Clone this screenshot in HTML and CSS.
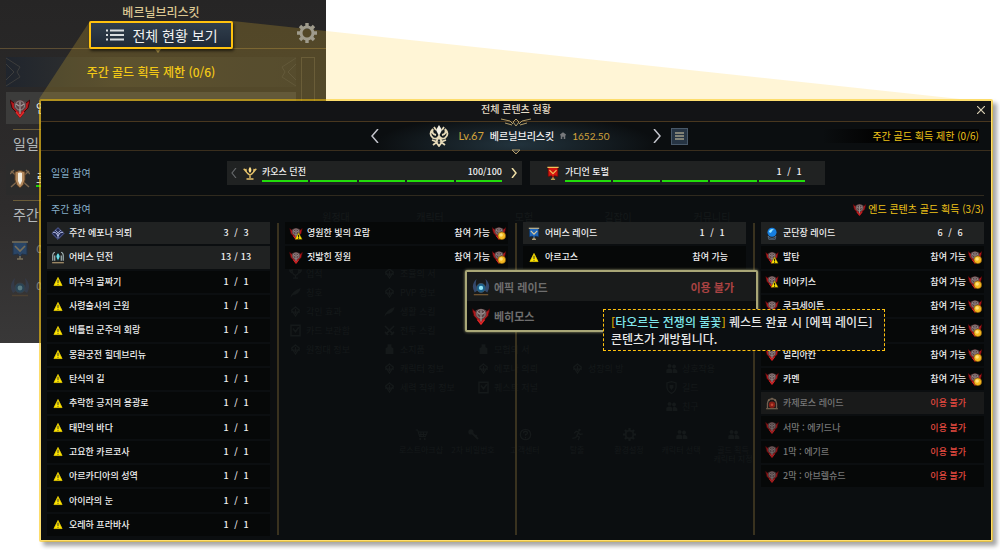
FILE: index.html
```html
<!DOCTYPE html>
<html lang="ko">
<head>
  <meta charset="utf-8">
  <title>전체 콘텐츠 현황</title>
  <link rel="stylesheet" href="styles.css">
</head>
<body>
  <svg class="sprite" aria-hidden="true">
    <symbol id="warn" viewBox="0 0 16 16">
      <path d="M8 3 L13 13 H3 Z" fill="#ffe600" stroke="#e8cc00" stroke-width="1" stroke-linejoin="round"/>
      <path d="M8 6 V10 M8 11 V12" stroke="#333" stroke-width="1.200"/>
    </symbol>
    <symbol id="emblem" viewBox="0 0 20 20">
      <path d="M0 2 L4 5 Q10 0 16 5 L20 2 L18 10 L15 13 L10 20 L5 13 L2 10 Z" fill="#b3181c" stroke="#3c0608"/>
      <path d="M4 4 Q10 0 16 4 L16 10 L10 15 L4 10 Z" fill="#5a4446"/>
      <circle cx="10" cy="7.500" r="4.500" fill="none" stroke="#948888" stroke-width="1"/>
      <path d="M10 4 V16 M6 6 L9 8 M14 6 L11 8" stroke="#a59c9c" stroke-width="1.200" fill="none"/>
      <path d="M6 14 L10 19 L14 14" fill="none" stroke="#e62a2a" stroke-width="1.300"/>
    </symbol>
    <symbol id="emblem-warn" viewBox="0 0 20 20">
      <use href="#emblem" width="20" height="20"/>
      <path d="M14 9 L19.500 19 H8.500 Z" fill="#ffe600" stroke="#6b5b00" stroke-width=".6"/>
      <path d="M14 12 V16 M14 17 V18" stroke="#111" stroke-width="1.600"/>
    </symbol>
    <symbol id="emblem-gold" viewBox="0 0 20 20">
      <use href="#emblem" width="20" height="20"/>
      <circle cx="14" cy="14" r="5.500" fill="#f5b921" stroke="#7c4b00" stroke-width=".8"/>
      <circle cx="13" cy="13" r="2.500" fill="#ffe27a"/>
    </symbol>
    <symbol id="epona" viewBox="0 0 20 20">
      <path d="M10 1 L19 10 L10 19 L1 10 Z" fill="#20284f" stroke="#5a67a8" stroke-width="1.500"/>
      <path d="M2 8 L7 9 L10 14 L13 9 L18 8 M6 5 L10 9 L14 5 M10 9 V17" fill="none" stroke="#c2caf2" stroke-width="1.300"/>
    </symbol>
    <symbol id="gate" viewBox="0 0 20 20">
      <path d="M1 18 H19" stroke="#a38d68" stroke-width="2"/>
      <path d="M2 15 V6 Q2 3 5 2 M18 15 V6 Q18 3 15 2 M5 15 V7 M15 15 V7" fill="none" stroke="#b8cccd" stroke-width="1.600"/>
      <path d="M10 3 L13 8 L10 15 L7 8 Z" fill="#1fb6c4"/>
      <path d="M10 5 V12" stroke="#d5ffff" stroke-width="1.500"/>
    </symbol>
    <symbol id="flag-blue" viewBox="0 0 20 20">
      <path d="M3 2 H17 V15 L12 14 L10 17 L8 14 L3 15 Z" fill="#1f66b8" stroke="#0d3260"/>
      <path d="M2 2 H18 M5 6 L10 11 L15 6 M7 19 H13 M10 16 V19" fill="none" stroke="#e3cf9b" stroke-width="1.600"/>
    </symbol>
    <symbol id="flag-red" viewBox="0 0 20 20">
      <path d="M3 2 H17 V15 L12 14 L10 17 L8 14 L3 15 Z" fill="#d3150e" stroke="#5b0905"/>
      <path d="M2 2 H18 M5 6 L10 11 L15 6 M7 19 H13 M10 16 V19" fill="none" stroke="#f0c25b" stroke-width="1.600"/>
    </symbol>
    <symbol id="torch" viewBox="0 0 20 20">
      <path d="M10 1 Q14 6 10 10 Q6 6 10 1 Z" fill="#ffe08a"/>
      <path d="M1 4 L7 11 L10 13 L13 11 L19 4 M5 9 L4 4 M15 9 L16 4 M10 12 V17 M5 18.500 H15" fill="none" stroke="#e3c06a" stroke-width="2"/>
    </symbol>
    <symbol id="orb" viewBox="0 0 20 20">
      <path d="M4 14 Q10 21 16 14 L15 19 H5 Z" fill="#26384d" stroke="#7e93a8" stroke-width=".8"/>
      <circle cx="10" cy="8" r="7" fill="#167fe0"/>
      <path d="M5 7 Q8 1 13 4 Q10 5 9 8 Q7 10 5 7 Z" fill="#9ae6ff"/>
    </symbol>
    <symbol id="epic" viewBox="0 0 20 20">
      <path d="M5 1 Q-2 8 3 16 L6 14 Q3 8 5 1 Z M15 1 Q22 8 17 16 L14 14 Q17 8 15 1 Z" fill="#34496d"/>
      <path d="M2 18.500 H18" stroke="#6e522f" stroke-width="1.500"/>
      <circle cx="10" cy="11" r="5" fill="#1b5f88" stroke="#3f5264"/>
      <circle cx="10" cy="11" r="2.400" fill="#8fe4f5"/>
    </symbol>
    <symbol id="kazeros" viewBox="0 0 20 20">
      <path d="M3 17 V10 Q4 3 10 3 Q16 3 17 10 V17" fill="none" stroke="#87715f" stroke-width="2"/>
      <path d="M1 18 H19 M4 4 L6 6 M16 4 L14 6 M10 1 V4" stroke="#a58a6b" stroke-width="1.600"/>
      <circle cx="10" cy="12" r="5" fill="#a31e14"/>
      <circle cx="10" cy="12" r="2" fill="#e8563c"/>
    </symbol>
    <symbol id="shield" viewBox="0 0 20 20">
      <path d="M1 2 L19 18 M19 2 L1 18 M0 5 L4 1 M16 1 L20 5" stroke="#7d674e" stroke-width="1.500"/>
      <path d="M5 3 Q10 0 15 3 V11 Q14 16 10 19 Q6 16 5 11 Z" fill="#b48a5e" stroke="#5a3d22"/>
      <path d="M8 4 Q10 3 12 4 V12 L10 16 L8 12 Z" fill="#f4eee2"/>
    </symbol>
    <symbol id="crown" viewBox="0 0 20 22">
      <path d="M10 0 L13 5 L10 11 L7 5 Z" fill="#f3f0e5"/>
      <path d="M5 2 L7 5 M15 2 L13 5 M4 4 Q-1 9 4 13 Q8 15 10 11 Q12 15 16 13 Q21 9 16 4 M4 4 Q2 9 7 10 M16 4 Q18 9 13 10 M3 15 L8 17 L4 20 M17 15 L12 17 L16 20 M10 12 L13 17 L10 21 L7 17 Z" fill="none" stroke="#e5d9b8" stroke-width="1.800"/>
    </symbol>
    <symbol id="gear" viewBox="0 0 20 20">
      <circle cx="10" cy="10" r="6" fill="none" stroke="currentColor" stroke-width="3"/>
      <path d="M10 0 V4 M10 16 V20 M0 10 H4 M16 10 H20 M3 3 L6 6 M14 14 L17 17 M17 3 L14 6 M3 17 L6 14" stroke="currentColor" stroke-width="3.400"/>
    </symbol>
    <symbol id="person" viewBox="0 0 20 20">
      <path d="M7 3 A3 3 0 1 1 6.900 3 M2 17 V12 Q7 8 11 12 V17 Z M14 4 A3 3 0 1 1 13.900 4 M12 17 V11 Q16 9 19 13 V17 Z" fill="currentColor"/>
    </symbol>
    <symbol id="mark" viewBox="0 0 20 20">
      <path d="M10 3 L16 8 L10 17 L4 8 Z M10 6 V14 M3 11 H17" fill="none" stroke="currentColor" stroke-width="2"/>
    </symbol>
    <symbol id="swords" viewBox="0 0 20 20">
      <path d="M3 3 L16 16 M17 3 L4 16 M3 12 L8 17 M17 12 L12 17" fill="none" stroke="currentColor" stroke-width="2.400"/>
    </symbol>
    <symbol id="trophy" viewBox="0 0 20 20">
      <path d="M5 3 H15 V8 Q14 12 10 13 Q6 12 5 8 Z M5 5 H1 Q2 9 6 9 M15 5 H19 Q18 9 14 9 M10 13 V17 M6 17 H14" fill="none" stroke="currentColor" stroke-width="2"/>
    </symbol>
    <symbol id="page" viewBox="0 0 20 20">
      <path d="M3 2 H17 V18 H3 Z M6 7 L10 12 L15 5" fill="none" stroke="currentColor" stroke-width="2.400"/>
    </symbol>
    <symbol id="feather" viewBox="0 0 20 20">
      <path d="M2 18 Q4 8 18 3 Q16 13 6 14 Z" fill="currentColor"/>
    </symbol>
    <symbol id="bag" viewBox="0 0 20 20">
      <path d="M4 8 Q10 3 16 8 V17 H4 Z M7 6 V2 H13 V6" fill="currentColor"/>
    </symbol>
    <symbol id="guild" viewBox="0 0 20 20">
      <path d="M3 3 L10 1 L17 3 V10 Q16 16 10 19 Q4 16 3 10 Z" fill="none" stroke="currentColor" stroke-width="2"/>
      <path d="M7 6 H13 V10 L10 14 L7 10 Z" fill="currentColor"/>
    </symbol>
    <symbol id="cart" viewBox="0 0 20 20">
      <path d="M1 3 H4 L7 13 H16 L19 6 H5 M7 10 H17 M9 6 V13 M13 6 V13" fill="none" stroke="currentColor" stroke-width="1.600"/>
      <circle cx="8" cy="17" r="1.600" fill="currentColor"/><circle cx="15" cy="17" r="1.600" fill="currentColor"/>
    </symbol>
    <symbol id="key" viewBox="0 0 20 20">
      <circle cx="6" cy="6" r="4" fill="currentColor"/>
      <path d="M7 7 L17 17 M13 13 L15 11" stroke="currentColor" stroke-width="3"/>
    </symbol>
    <symbol id="run" viewBox="0 0 20 20">
      <circle cx="13" cy="3" r="2" fill="currentColor"/>
      <path d="M5 8 L8 5 L12 6 L9 12 L13 14 L11 19 M9 12 L7 15 L2 16 M11 7 L14 10 L18 9" fill="none" stroke="currentColor" stroke-width="2"/>
    </symbol>
    <symbol id="help" viewBox="0 0 20 20">
      <circle cx="10" cy="10" r="8" fill="none" stroke="currentColor" stroke-width="2"/>
      <path d="M7 8 Q7 5 10 5 Q13 5 13 8 Q12 10 10 10 V12 M10 14 V16" fill="none" stroke="currentColor" stroke-width="2"/>
    </symbol>
  </svg>

  <div class="stage">
    <aside class="side">
      <header class="side-head">
        <p class="side-name">베르닐브리스킷</p>
        <button type="button" class="view-all">
          <svg class="list-icon" viewBox="0 0 18 12"><path d="M0 1.500 H2 M0 6 H2 M0 10.500 H2 M4 1.500 H18 M4 6 H18 M4 10.500 H18" stroke="#d9dde0" stroke-width="2"/></svg>
          전체 현황 보기
        </button>
        <button type="button" class="settings" aria-label="설정"><svg><use href="#gear"/></svg></button>
        <svg class="side-tick" viewBox="0 0 8 5"><path d="M0 0 H8 L4 5 Z" fill="#a18c50"/></svg>
      </header>
      <div class="side-body">
        <div class="side-list">
          <p class="side-limit">
            <svg class="wing" viewBox="0 0 20 30"><path d="M0 1 L14 10 L11 15 L14 20 L0 29 M0 7 L8 15 L0 23" fill="none" stroke="#3d3d3c"/></svg>
            주간 골드 획득 제한 (0/6)
            <svg class="wing" viewBox="0 0 20 30"><path d="M20 1 L6 10 L9 15 L6 20 L20 29 M20 7 L12 15 L20 23" fill="none" stroke="#3d3d3c"/></svg>
          </p>
          <p class="side-row lit"><svg><use href="#emblem"/></svg>엔드</p>
          <h3>일일</h3>
          <p class="side-row"><svg><use href="#shield"/></svg><span class="side-gauge">로</span></p>
          <h3>주간</h3>
          <p class="side-row dim"><svg><use href="#flag-blue"/></svg>어</p>
          <p class="side-row dim"><svg><use href="#epic"/></svg>에</p>
        </div>
        <div class="side-scroll"></div>
      </div>
    </aside>

    <div class="beam"></div>

    <main class="popup">
      <!-- 뒤에 비치는 게임 메뉴 -->
      <div class="ghost" aria-hidden="true">
        <div class="ghost-heads"><span>원정대</span><span>캐릭터</span><span>모험</span><span>길잡이</span><span>커뮤니티</span></div>
        <div class="ghost-cols">
          <ul class="from-3">
            <li><svg><use href="#trophy"/></svg>업적</li>
            <li><svg><use href="#feather"/></svg>칭호</li>
            <li><svg><use href="#mark"/></svg>각인 효과</li>
            <li><svg><use href="#page"/></svg>카드 보관함</li>
            <li><svg><use href="#mark"/></svg>원정대 정보</li>
          </ul>
          <ul class="from-3">
            <li><svg><use href="#mark"/></svg>조율의 서</li>
            <li><svg><use href="#mark"/></svg>PVP 정보</li>
            <li><svg><use href="#feather"/></svg>생활 스킬</li>
            <li><svg><use href="#swords"/></svg>전투 스킬</li>
            <li><svg><use href="#bag"/></svg>소지품</li>
            <li><svg><use href="#mark"/></svg>캐릭터 정보</li>
            <li><svg><use href="#mark"/></svg>세력 직위 정보</li>
          </ul>
          <ul class="from-7">
            <li><svg><use href="#bag"/></svg>모험의 서</li>
            <li><svg><use href="#mark"/></svg>에포나 의뢰</li>
            <li><svg><use href="#page"/></svg>퀘스트 저널</li>
          </ul>
          <ul class="from-8">
            <li><svg><use href="#mark"/></svg>성장의 방</li>
          </ul>
          <ul class="from-8">
            <li><svg><use href="#person"/></svg>상호작용</li>
            <li><svg><use href="#guild"/></svg>길드</li>
            <li><svg><use href="#person"/></svg>친구</li>
          </ul>
        </div>
        <div class="ghost-foot">
          <span><svg><use href="#cart"/></svg>로스트아크샵</span>
          <span><svg><use href="#key"/></svg>2차 비밀번호</span>
          <span><svg><use href="#help"/></svg>고객센터</span>
          <span><svg><use href="#run"/></svg>탈출</span>
          <span><svg><use href="#gear"/></svg>환경설정</span>
          <span><svg><use href="#person"/></svg>캐릭터 선택</span>
          <span><svg><use href="#person"/></svg>골드 획득<br>캐릭터 지정</span>
        </div>
      </div>

      <header class="title-bar">
        <h1>전체 콘텐츠 현황</h1>
        <button type="button" class="close" aria-label="닫기"><svg viewBox="0 0 8 8"><path d="M0 0 L8 8 M8 0 L0 8" stroke="#d9cfb4" stroke-width="1.200"/></svg></button>
        <svg class="ornament" viewBox="0 0 30 9"><path d="M0 1 L9 3 L12 6 M30 1 L21 3 L18 6 M4 5 L11 7 M26 5 L19 7 M15 1 L18 4 L15 8 L12 4 Z" fill="none" stroke="#b09b68"/></svg>
      </header>

      <section class="character">
        <nav class="switcher">
          <button type="button" class="arrow" aria-label="이전 캐릭터"><svg viewBox="0 0 8 14"><path d="M7 0 L1 7 L7 14" fill="none" stroke="#c3c4cc" stroke-width="1.500"/></svg></button>
          <div class="who">
            <svg class="crown"><use href="#crown"/></svg>
            <span class="level">Lv.67</span>
            <strong>베르닐브리스킷</strong>
            <svg class="item-icon" viewBox="0 0 8 10"><path d="M4 0 L8 3 L7 5 V9 H5 V6 H3 V9 H1 V5 L0 3 Z" fill="#77797c"/></svg>
            <span class="item-level">1652.50</span>
          </div>
          <button type="button" class="arrow" aria-label="다음 캐릭터"><svg viewBox="0 0 8 14"><path d="M1 0 L7 7 L1 14" fill="none" stroke="#c3c4cc" stroke-width="1.500"/></svg></button>
        </nav>
        <div class="character-side">
          <button type="button" class="list-button" aria-label="캐릭터 목록"><svg viewBox="0 0 9 8"><path d="M0 1 H9 M0 4 H9 M0 7 H9" stroke="#dccfa9" stroke-width="1.200"/></svg></button>
          <p class="gold-limit">주간 골드 획득 제한 (0/6)</p>
        </div>
        <svg class="ornament small" viewBox="0 0 8 6"><path d="M0 1 H8 L4 5 Z" fill="#23262a" stroke="#b09b68"/></svg>
      </section>

      <section class="daily">
        <h2>일일 참여</h2>
        <div class="card">
          <button type="button" class="card-nav" aria-label="이전" disabled><svg viewBox="0 0 6 10"><path d="M5 0 L1 5 L5 10" fill="none" stroke="#65686a" stroke-width="1.200"/></svg></button>
          <svg class="card-icon"><use href="#torch"/></svg>
          <div class="card-body">
            <p><span>카오스 던전</span><span>100/100</span></p>
            <div class="segments"><i></i><i></i><i></i><i></i><i></i></div>
          </div>
          <button type="button" class="card-nav" aria-label="다음"><svg viewBox="0 0 6 10"><path d="M1 0 L5 5 L1 10" fill="none" stroke="#efdfa6" stroke-width="1.500"/></svg></button>
        </div>
        <div class="card">
          <span class="card-nav"></span>
          <svg class="card-icon"><use href="#flag-red"/></svg>
          <div class="card-body">
            <p><span>가디언 토벌</span><span class="count"><b>1</b>/<b>1</b></span></p>
            <div class="segments"><i></i><i></i><i></i><i></i><i></i></div>
          </div>
        </div>
      </section>

      <section class="weekly">
        <header class="weekly-head">
          <h2>주간 참여</h2>
          <p class="gold-end"><svg><use href="#emblem"/></svg>엔드 콘텐츠 골드 획득 (3/3)</p>
        </header>
        <div class="columns">
          <ul class="column">
            <li class="head"><svg><use href="#epona"/></svg>주간 에포나 의뢰<span class="count"><b>3</b>/<b>3</b></span></li>
            <li class="head"><svg><use href="#gate"/></svg>어비스 던전<span class="count"><b>13</b>/<b>13</b></span></li>
            <li><svg><use href="#warn"/></svg>마수의 골짜기<span class="count"><b>1</b>/<b>1</b></span></li>
            <li><svg><use href="#warn"/></svg>사령술사의 근원<span class="count"><b>1</b>/<b>1</b></span></li>
            <li><svg><use href="#warn"/></svg>비틀린 군주의 회랑<span class="count"><b>1</b>/<b>1</b></span></li>
            <li><svg><use href="#warn"/></svg>몽환궁전 힐데브리뉴<span class="count"><b>1</b>/<b>1</b></span></li>
            <li><svg><use href="#warn"/></svg>탄식의 길<span class="count"><b>1</b>/<b>1</b></span></li>
            <li><svg><use href="#warn"/></svg>추락한 긍지의 용광로<span class="count"><b>1</b>/<b>1</b></span></li>
            <li><svg><use href="#warn"/></svg>태만의 바다<span class="count"><b>1</b>/<b>1</b></span></li>
            <li><svg><use href="#warn"/></svg>고요한 카르코사<span class="count"><b>1</b>/<b>1</b></span></li>
            <li><svg><use href="#warn"/></svg>아르카디아의 성역<span class="count"><b>1</b>/<b>1</b></span></li>
            <li><svg><use href="#warn"/></svg>아이라의 눈<span class="count"><b>1</b>/<b>1</b></span></li>
            <li><svg><use href="#warn"/></svg>오레하 프라바사<span class="count"><b>1</b>/<b>1</b></span></li>
          </ul>
          <ul class="column">
            <li><svg><use href="#emblem-warn"/></svg>영원한 빛의 요람<span class="state gold">참여 가능<svg><use href="#emblem-gold"/></svg></span></li>
            <li><svg><use href="#emblem"/></svg>짓밟힌 정원<span class="state gold">참여 가능<svg><use href="#emblem-gold"/></svg></span></li>
          </ul>
          <div class="column-wrap">
            <ul class="column">
              <li class="head"><svg><use href="#flag-blue"/></svg>어비스 레이드<span class="count"><b>1</b>/<b>1</b></span></li>
              <li><svg><use href="#warn"/></svg>아르고스<span class="state">참여 가능</span></li>
            </ul>
            <div class="flyout">
              <p><svg><use href="#epic"/></svg>에픽 레이드<span>이용 불가</span></p>
              <p><svg><use href="#emblem"/></svg>베히모스</p>
              <div class="tooltip" role="tooltip"><em>[</em><mark>타오르는 전쟁의 불꽃</mark><em>]</em> 퀘스트 완료 시 [에픽 레이드]<br>콘텐츠가 개방됩니다.</div>
            </div>
          </div>
          <ul class="column">
            <li class="head"><svg><use href="#orb"/></svg>군단장 레이드<span class="count"><b>6</b>/<b>6</b></span></li>
            <li><svg><use href="#emblem-warn"/></svg>발탄<span class="state gold">참여 가능<svg><use href="#emblem-gold"/></svg></span></li>
            <li><svg><use href="#emblem-warn"/></svg>비아키스<span class="state gold">참여 가능<svg><use href="#emblem-gold"/></svg></span></li>
            <li><svg><use href="#emblem"/></svg>쿠크세이튼<span class="state gold">참여 가능<svg><use href="#emblem-gold"/></svg></span></li>
            <li><svg><use href="#emblem"/></svg><span class="state gold">참여 가능<svg><use href="#emblem-gold"/></svg></span></li>
            <li><svg><use href="#emblem"/></svg>일리아칸<span class="state gold">참여 가능<svg><use href="#emblem-gold"/></svg></span></li>
            <li><svg><use href="#emblem"/></svg>카멘<span class="state gold">참여 가능<svg><use href="#emblem-gold"/></svg></span></li>
            <li class="head locked"><svg><use href="#kazeros"/></svg>카제로스 레이드<span class="state">이용 불가</span></li>
            <li class="locked"><svg><use href="#emblem"/></svg>서막 : 에키드나<span class="state">이용 불가</span></li>
            <li class="locked"><svg><use href="#emblem"/></svg>1막 : 에기르<span class="state">이용 불가</span></li>
            <li class="locked"><svg><use href="#emblem"/></svg>2막 : 아브렐슈드<span class="state">이용 불가</span></li>
          </ul>
        </div>
      </section>
    </main>
  </div>
</body>
</html>
```

FILE: styles.css
```css
* {
  box-sizing: border-box;
}

body {
  margin: 0;
  background: #fff;
  color: #f0f0f0;
  font-family: "Noto Sans CJK KR", sans-serif;
  font-size: 9px;
  line-height: 14px;
}

h1, h2, h3, p, ul {
  margin: 0;
  padding: 0;
  font-weight: normal;
  list-style: none;
}

button {
  padding: 0;
  border: 0;
  background: none;
  color: inherit;
  font: inherit;
  cursor: pointer;
}

svg {
  display: block;
  flex: none;
}

.sprite {
  position: absolute;
  width: 0;
  height: 0;
}

.stage {
  position: relative;
  display: flex;
  min-height: 100vh;
  padding: 99px 7px 8px 39px;
}

/* 왼쪽 뒤 패널 */
.side {
  position: absolute;
  top: 0;
  left: 0;
  width: 326px;
  height: 343px;
  overflow: hidden;
  background: linear-gradient(#262525, #2e2c2c 60%, #393838);
}

.side-head {
  position: relative;
  display: flex;
  flex-direction: column;
  align-items: center;
  height: 49px;
  padding: 3px 4px 0 0;
  border-bottom: 1px solid #5c4d33;
}

.side-name {
  color: #dcc791;
  font-size: 12px;
  font-weight: 500;
  line-height: 18px;
}

.view-all {
  position: relative;
  z-index: 2;
  display: flex;
  flex: none;
  align-items: center;
  gap: 8px;
  height: 28px;
  padding: 0 13px 0 15px;
  border: 2px solid #ffc20e;
  border-radius: 2px;
  background: linear-gradient(#303e4c, #202a38);
  box-shadow: 1px 2px 3px rgba(0, 0, 0, 0.6);
  color: #f2f2f2;
  font-size: 14px;
  line-height: 20px;
}

.list-icon {
  width: 18px;
  height: 12px;
}

.settings {
  position: absolute;
  z-index: 2;
  top: 23px;
  right: 9px;
  color: #9f9b8c;
}

.settings svg {
  width: 20px;
  height: 20px;
}

.side-tick {
  position: absolute;
  top: 48px;
  left: 154px;
  width: 8px;
  height: 5px;
}

.side-body {
  display: flex;
  gap: 5px;
  padding: 8px 11px 0 6px;
}

.side-list {
  flex: 1;
}

.side-limit {
  display: flex;
  justify-content: space-between;
  height: 30px;
  margin-bottom: 5px;
  background: linear-gradient(90deg, #20252d, #34332f 40%, #2c2c2c);
  color: #f0c810;
  font-size: 12px;
  font-weight: 500;
  line-height: 30px;
}

.wing {
  width: 20px;
  height: 30px;
}

.side-row {
  display: flex;
  align-items: center;
  gap: 6px;
  height: 32px;
  margin-bottom: 5px;
  padding-left: 4px;
  background: #2b2b2b;
  font-size: 12px;
}

.side-row svg {
  width: 20px;
  height: 20px;
}

.side-row.lit {
  background: #3c3c3b;
}

.side-row.dim {
  background: none;
  opacity: 0.4;
}

.side-gauge {
  border-bottom: 2px solid #1fd40c;
}

.side-list h3 {
  height: 34px;
  margin-left: 7px;
  border-top: 1px solid #6b5c39;
  color: #b4b8bb;
  font-size: 14px;
  line-height: 26px;
}

.side-scroll {
  width: 14px;
  height: 280px;
  border: 1px solid #45423a;
}

.beam {
  position: absolute;
  top: 21px;
  left: 39px;
  right: 40px;
  height: 78px;
  background: rgba(255, 205, 50, 0.2);
  clip-path: polygon(51px 0, 194px 0, 100% 100%, 0 100%);
}

/* 전체 현황 창 */
.popup {
  position: relative;
  display: flex;
  flex: 1;
  flex-direction: column;
  min-width: 0;
  border: 2px solid rgba(255, 202, 13, 0.6);
  border-radius: 2px;
  background: #0b0e10;
  background-clip: padding-box;
  box-shadow: 4px 4px 4px rgba(0, 0, 0, 0.35);
}

.ghost {
  position: absolute;
  inset: 0;
  padding: 109px 232px 0 248px;
  color: #15191a;
}

.ghost-heads {
  display: grid;
  grid-template-columns: repeat(5, 1fr);
  font-size: 10px;
  text-align: center;
}

.ghost-cols {
  display: grid;
  grid-template-columns: repeat(5, 1fr);
  height: 202px;
  margin-top: 2px;
  white-space: nowrap;
}

.ghost-cols .from-3 {
  padding-top: 38px;
}

.ghost-cols .from-7 {
  padding-top: 114px;
}

.ghost-cols .from-8 {
  padding-top: 133px;
}

.ghost-cols li {
  display: flex;
  align-items: center;
  gap: 4px;
  height: 19px;
}

.ghost svg {
  width: 13px;
  height: 13px;
}

.ghost-foot {
  display: grid;
  grid-template-columns: repeat(7, 1fr);
  margin-left: 106px;
  font-size: 8px;
  line-height: 9px;
  text-align: center;
  white-space: nowrap;
}

.ghost-foot svg {
  margin: 0 auto 4px;
}

.title-bar {
  position: relative;
  height: 21px;
  border-bottom: 1px solid #49371f;
  background: #131416;
  text-align: center;
}

.title-bar h1 {
  color: #e9dfca;
  font-size: 10px;
  font-weight: 500;
  line-height: 16px;
}

.close {
  position: absolute;
  top: 5px;
  right: 6px;
}

.close svg {
  width: 8px;
  height: 8px;
}

.ornament {
  position: absolute;
  z-index: 1;
  top: 17px;
  left: calc(50% - 15px);
  width: 30px;
  height: 9px;
}

.ornament.small {
  top: 27px;
  left: calc(50% - 4px);
  width: 8px;
  height: 6px;
}

.character {
  position: relative;
  display: grid;
  grid-template-columns: 1fr 290px 1fr;
  align-items: center;
  height: 29px;
  border-bottom: 1px solid #3a2e1d;
  background: radial-gradient(ellipse 140px 30px at 50% 80%, #22333d, rgba(11, 14, 16, 0) 100%);
}

.switcher {
  display: flex;
  grid-column: 2;
  align-items: center;
  justify-content: space-between;
}

.arrow svg {
  width: 8px;
  height: 14px;
}

.who {
  display: flex;
  align-items: center;
  gap: 6px;
  padding-left: 6px;
  font-size: 10px;
}

.who strong {
  font-weight: 500;
}

.crown {
  width: 20px;
  height: 22px;
  margin-right: 4px;
}

.level,
.item-level {
  color: #d3a33b;
  font-family: Lato, sans-serif;
  font-size: 11px;
}

.item-icon {
  width: 6px;
  height: 8px;
}

.item-level {
  font-size: 10px;
}

.character-side {
  display: flex;
  align-items: center;
  justify-content: space-between;
  padding: 0 12px 0 10px;
}

.list-button {
  display: grid;
  place-items: center;
  width: 17px;
  height: 17px;
  border: 1px solid #485868;
  background: #263443;
}

.list-button svg {
  width: 9px;
  height: 8px;
}

.gold-limit {
  padding-left: 50px;
  background: linear-gradient(90deg, rgba(3, 3, 3, 0), #030303 50px);
  color: #f0c419;
  font-size: 10px;
}

.daily {
  position: relative;
  display: grid;
  grid-template-columns: 172px 1fr 1fr 151px;
  gap: 8px;
  align-items: center;
  height: 45px;
  margin: 0 7px 0 6px;
  border-bottom: 1px solid #302a1e;
}

h2 {
  padding-left: 4px;
  color: #85adc8;
  font-size: 10px;
}

.card {
  display: flex;
  align-items: center;
  height: 24px;
  padding: 0 4px;
  background: #202222;
}

.card-nav {
  width: 7px;
}

.card-nav svg {
  width: 6px;
  height: 10px;
}

.card-icon {
  width: 14px;
  height: 14px;
  margin: 0 5px;
}

.card-body {
  flex: 1;
  margin-right: 9px;
}

.card > .card-body:last-child {
  margin-right: 16px;
}

.card-body p {
  display: flex;
  justify-content: space-between;
  font-weight: 500;
}

.segments {
  display: grid;
  grid-template-columns: repeat(5, 1fr);
  gap: 2px;
  padding-top: 1px;
}

.segments i {
  height: 2px;
  background: #22dd0b;
}

.weekly {
  position: relative;
  display: flex;
  flex: 1;
  flex-direction: column;
  padding: 0 7px 4px 6px;
}

.weekly-head {
  display: flex;
  align-items: center;
  justify-content: space-between;
  height: 26px;
}

.gold-end {
  display: flex;
  align-items: center;
  gap: 2px;
  color: #f0c419;
  font-size: 10px;
}

.gold-end svg {
  width: 13px;
  height: 13px;
}

.columns {
  display: grid;
  flex: 1;
  grid-template-columns: repeat(4, 1fr);
  gap: 15px;
}

.column {
  position: relative;
  display: grid;
  grid-template-rows: repeat(13, minmax(22px, 1fr));
  gap: 2px;
  height: 100%;
}

.column::after {
  content: "";
  position: absolute;
  top: 1px;
  bottom: 1px;
  right: -9px;
  width: 2px;
  background: #39321f;
}

.columns > .column:last-child::after {
  display: none;
}

.column-wrap {
  position: relative;
}

.column li {
  display: flex;
  align-items: center;
  gap: 3px;
  padding: 0 2px 0 3px;
  background: #060808;
  font-weight: 500;
}

.column li > svg {
  width: 16px;
  height: 13px;
}

.column .head {
  background: #202222;
}

.column .locked {
  color: #777;
}

.column .locked.head {
  background: #191a1a;
}

.column .locked svg {
  opacity: 0.8;
}

.count {
  display: grid;
  grid-template-columns: 12px 8px 12px;
  text-align: center;
}

.count b {
  font-weight: inherit;
}

.column .count,
.column .state {
  margin-left: auto;
  margin-right: 16px;
}

.column .state.gold {
  display: flex;
  align-items: center;
  gap: 2px;
  margin-right: 0;
}

.state svg {
  width: 14px;
  height: 14px;
}

.locked .state {
  color: #e0483f;
}

.flyout {
  position: absolute;
  z-index: 1;
  top: 48px;
  left: -58px;
  right: -12px;
  border: 2px solid #a9a777;
  border-radius: 2px;
  background: #0a0c0d;
  box-shadow: 0 0 3px #a9a777;
}

.flyout p {
  display: flex;
  align-items: center;
  gap: 4px;
  height: 29px;
  padding: 0 22px 0 5px;
  color: #6e6e6e;
  font-size: 11px;
  font-weight: 700;
}

.flyout p:first-child {
  background: #191b1b;
}

.flyout p svg {
  width: 18px;
  height: 18px;
}

.flyout p span {
  margin-left: auto;
  color: #ab4343;
}

.tooltip {
  position: absolute;
  top: 37px;
  left: 136px;
  padding: 3px 12px 3px 7px;
  border: 1px dashed #ffc20e;
  background: #0b0e11;
  color: #e8e8e8;
  font-size: 12px;
  font-weight: 500;
  line-height: 17px;
  white-space: nowrap;
}

.tooltip em {
  color: #d9a600;
  font-style: normal;
}

.tooltip mark {
  background: none;
  color: #7fe6ea;
}
```
